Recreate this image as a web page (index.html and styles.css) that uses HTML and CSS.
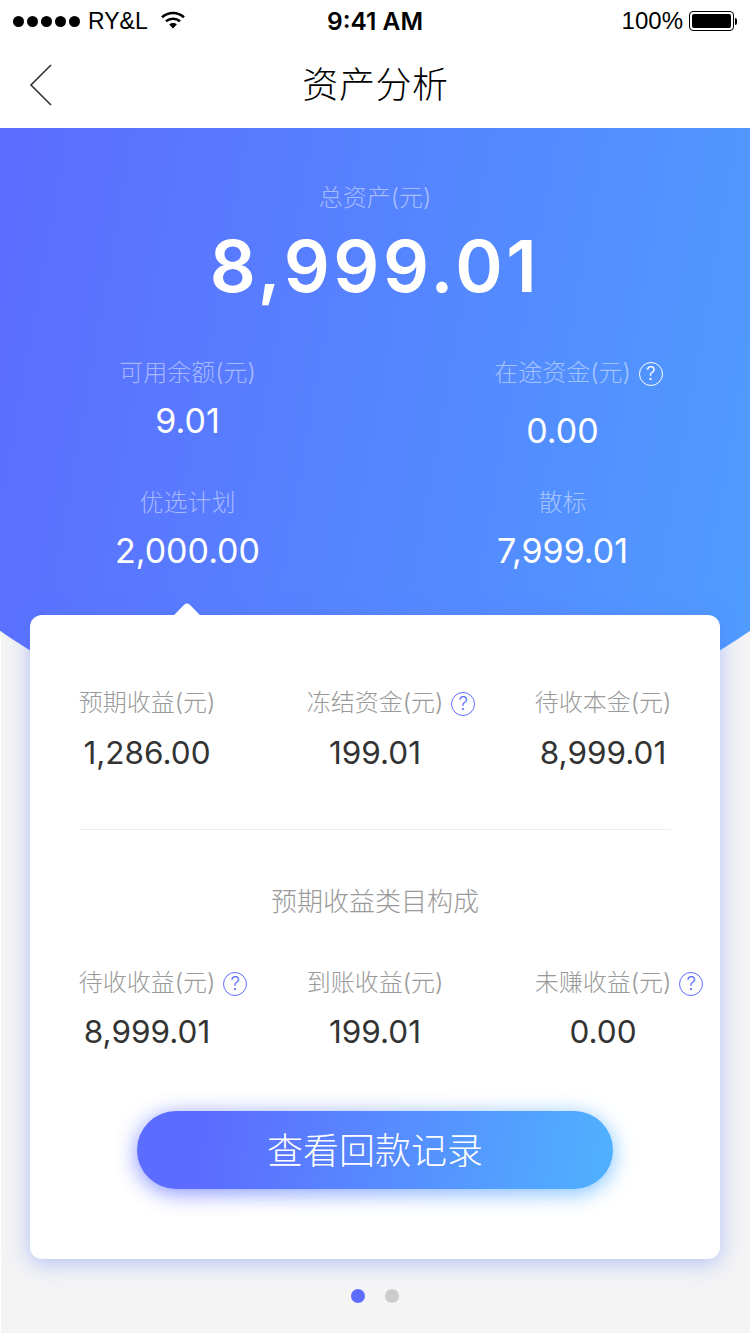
FILE: index.html
```html
<!DOCTYPE html>
<html lang="zh-CN">

<head>
    <meta charset="UTF-8">
    <meta name="viewport" content="width=device-width, initial-scale=1.0">
    <title>资产分析</title>
    <link rel="stylesheet" href="styles.css">
</head>

<body>
    <div class="status-bar">
        <div class="status-left">
            <span class="signal"><i></i><i></i><i></i><i></i><i></i></span>
            <span class="carrier">RY&amp;L</span>
            <svg class="wifi" width="24" height="18" viewBox="0 0 24 18">
                <path d="M1 6.2C7.4 .6 16.6 .6 23 6.2" fill="none" stroke="#000" stroke-width="2.6" />
                <path d="M5 10.3C9 6.9 15 6.9 19 10.3" fill="none" stroke="#000" stroke-width="2.6" />
                <path d="M8.2 13.4C10.4 11.6 13.6 11.6 15.8 13.4L12 17.4Z" fill="#000" />
            </svg>
        </div>
        <div class="status-time">9:41 AM</div>
        <div class="status-right">
            <span>100%</span>
            <span class="battery"><i></i></span>
            <span class="battery-cap"></span>
        </div>
    </div>

    <header class="nav">
        <svg class="back" width="24" height="42" viewBox="0 0 24 42">
            <path d="M22 1L2 21L22 41" fill="none" stroke="#333" stroke-width="1.6" />
        </svg>
        <h1>资产分析</h1>
    </header>

    <main class="main">
        <section class="hero">
            <div class="hero-label">总资产(元)</div>
            <div class="hero-total">8,999.01</div>
            <div class="hero-grid">
                <div class="cell">
                    <div class="label">可用余额(元)</div>
                    <div class="value">9.01</div>
                </div>
                <div class="cell">
                    <div class="label">在途资金(元)<span class="help">?</span></div>
                    <div class="value value-low">0.00</div>
                </div>
                <div class="cell">
                    <div class="label">优选计划</div>
                    <div class="value">2,000.00</div>
                </div>
                <div class="cell">
                    <div class="label">散标</div>
                    <div class="value">7,999.01</div>
                </div>
            </div>
        </section>

        <section class="card">
            <div class="card-row card-row-first">
                <div class="cell">
                    <div class="label">预期收益(元)</div>
                    <div class="value">1,286.00</div>
                </div>
                <div class="cell">
                    <div class="label">冻结资金(元)<span class="help">?</span></div>
                    <div class="value">199.01</div>
                </div>
                <div class="cell">
                    <div class="label">待收本金(元)</div>
                    <div class="value">8,999.01</div>
                </div>
            </div>
            <div class="divider"></div>
            <div class="card-title">预期收益类目构成</div>
            <div class="card-row card-row-second">
                <div class="cell">
                    <div class="label">待收收益(元)<span class="help">?</span></div>
                    <div class="value">8,999.01</div>
                </div>
                <div class="cell">
                    <div class="label">到账收益(元)</div>
                    <div class="value">199.01</div>
                </div>
                <div class="cell">
                    <div class="label">未赚收益(元)<span class="help">?</span></div>
                    <div class="value">0.00</div>
                </div>
            </div>
            <button class="record-btn">查看回款记录</button>
        </section>

        <div class="dots">
            <span class="dot dot-active"></span>
            <span class="dot"></span>
        </div>
    </main>
</body>

</html>
```

FILE: styles.css
```css
* {
    box-sizing: border-box;
}

body {
    margin: 0;
    background-color: #fff;
    color: #333;
    font-family: Inter, "Noto Sans CJK SC", sans-serif;
}

.status-bar {
    display: grid;
    grid-template-columns: 1fr auto 1fr;
    align-items: center;
    height: 40px;
    padding: 2px 13px 0;
    color: #000;
    font-family: "Liberation Sans", sans-serif;
    font-size: 24px;
}

.status-left {
    display: flex;
    align-items: center;
}

.signal {
    display: flex;
    gap: 3px;
}

.signal i {
    width: 11px;
    height: 11px;
    border-radius: 50%;
    background-color: #000;
}

.carrier {
    margin-left: 8px;
    font-size: 23px;
}

.wifi {
    margin-left: 13px;
    margin-top: -2px;
}

.status-time {
    font-family: Inter, sans-serif;
    font-size: 24.5px;
    font-weight: 600;
}

.status-right {
    display: flex;
    align-items: center;
    justify-content: flex-end;
}

.battery {
    width: 45px;
    height: 20px;
    margin-left: 6px;
    padding: 2px;
    border: 1px solid #000;
    border-radius: 4px;
}

.battery i {
    display: block;
    width: 100%;
    height: 100%;
    border-radius: 2px;
    background-color: #000;
}

.battery-cap {
    width: 2px;
    height: 7px;
    margin-left: 1px;
    border-radius: 0 2px 2px 0;
    background-color: #000;
}

.nav {
    position: relative;
    display: flex;
    align-items: center;
    justify-content: center;
    height: 88px;
    padding: 2px 0 0 1px;
}

.nav h1 {
    margin: 0;
    color: #000;
    font-size: 36px;
    font-weight: 300;
    line-height: 86px;
    letter-spacing: 0.6px;
}

.back {
    position: absolute;
    left: 29px;
    top: 24px;
}

.main {
    height: 1205px;
    margin-bottom: 1px;
    background: linear-gradient(#fff, #fff) left / 1px 100% no-repeat, #f4f4f5;
}

.hero {
    height: 621px;
    padding-top: 53px;
    background-image: linear-gradient(100deg, #5c6cff 0%, #4f9dff 100%);
    clip-path: circle(654px at 50% -33px);
    color: #fff;
    text-align: center;
}

.hero-label {
    color: rgba(255, 255, 255, 0.48);
    font-size: 24px;
    font-weight: 300;
    line-height: 34px;
}

.hero-total {
    margin-top: 1px;
    font-size: 72px;
    font-weight: 600;
    line-height: 100px;
    letter-spacing: 3.6px;
}

.hero-grid {
    display: grid;
    grid-template-columns: 1fr 1fr;
    grid-auto-rows: 130px;
    margin-top: 40px;
}

.cell {
    text-align: center;
}

.label {
    color: #999;
    font-size: 24px;
    font-weight: 300;
    line-height: 34px;
}

.value {
    margin-top: 8px;
    font-size: 31.5px;
    line-height: 48px;
}

.hero .label {
    color: rgba(255, 255, 255, 0.48);
}

.hero .value {
    margin-top: 7px;
    font-size: 34px;
}

.hero .value-low {
    margin-top: 17px;
}

.help {
    display: inline-block;
    width: 24px;
    height: 24px;
    margin-left: 8px;
    margin-right: -32px;
    border: 1px solid #5f6dff;
    border-radius: 50%;
    color: #5f6dff;
    font-size: 19px;
    line-height: 22px;
    text-align: center;
    vertical-align: 1px;
}

.hero .help {
    border-color: #fff;
    color: #fff;
}

.card {
    position: relative;
    z-index: 0;
    width: 690px;
    height: 644px;
    margin: -134px 0 0 30px;
    padding: 71px 3px 0;
    border-radius: 12px;
    background-color: #fff;
    box-shadow: 0 4px 22px rgba(85, 120, 245, 0.42);
}

/* little arrow pointing at the selected 优选计划 */
.card::before {
    content: "";
    position: absolute;
    left: 145px;
    top: -8px;
    width: 24px;
    height: 24px;
    border-radius: 4px;
    background-color: #fff;
    transform: rotate(45deg);
}

.card-row {
    display: grid;
    grid-template-columns: repeat(3, 228px);
}

.card-row-first .value {
    margin-top: 9px;
}

.card-row-second {
    margin-top: 47px;
}

.divider {
    height: 1px;
    margin: 52px 46px 0 47px;
    background-color: #eee;
}

.card-title {
    margin-top: 55px;
    color: #999;
    font-size: 26px;
    font-weight: 300;
    line-height: 34px;
    text-align: center;
}

.record-btn {
    position: relative;
    display: block;
    width: 476px;
    height: 78px;
    margin: 55px auto 0;
    padding: 0 0 4px;
    border: none;
    border-radius: 39px;
    background-image: linear-gradient(100deg, #5c6cff 15%, #50b2ff 100%);
    color: #fff;
    font-family: inherit;
    font-size: 36px;
    font-weight: 300;
}

/* coloured glow under the button, follows its gradient */
.record-btn::before {
    content: "";
    position: absolute;
    inset: 4px 0 -4px;
    z-index: -1;
    border-radius: 39px;
    background-image: linear-gradient(100deg, #5c6cff 15%, #50b2ff 100%);
    filter: blur(11px);
    opacity: 0.75;
}

.dots {
    display: flex;
    justify-content: center;
    gap: 20px;
    margin-top: 30px;
}

.dot {
    width: 14px;
    height: 14px;
    border-radius: 50%;
    background-color: #ccc;
}

.dot-active {
    background-color: #5f6dff;
}
```
